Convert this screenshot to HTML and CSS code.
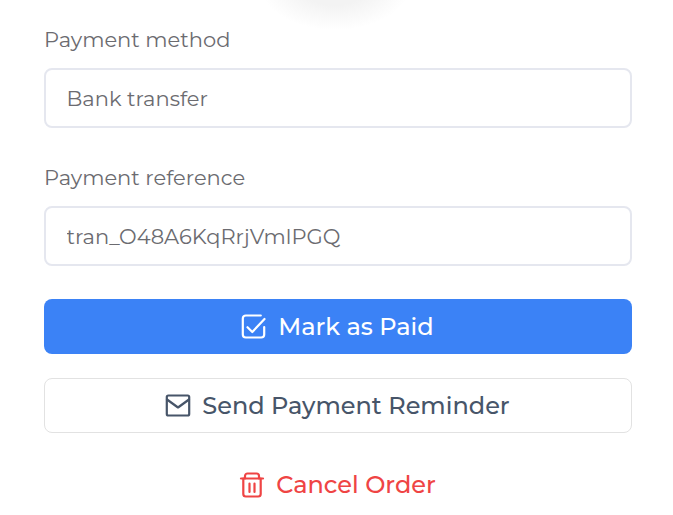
FILE: index.html
```html
<!DOCTYPE html>
<html lang="en">
  <head>
    <meta charset="UTF-8" />
    <meta name="viewport" content="width=device-width, initial-scale=1.0" />
    <title>Order payment</title>
    <link rel="stylesheet" href="styles.css">
  </head>
  <body>
    <div class="top-shadow"></div>

    <div class="field">
      <label class="field-label" for="method">Payment method</label>
      <input class="field-input" id="method" type="text" value="Bank transfer" />
    </div>

    <div class="field">
      <label class="field-label" for="reference">Payment reference</label>
      <input class="field-input" id="reference" type="text" value="tran_O48A6KqRrjVmlPGQ" />
    </div>

    <div class="actions">
      <button class="btn btn-primary" type="button">
        <svg class="icon" viewBox="0 0 26 26" fill="none" stroke="currentColor" stroke-width="2.2" stroke-linecap="round" stroke-linejoin="round">
          <path d="M23.200 13v7.500a3 3 0 0 1-3 3H4.800a3 3 0 0 1-3-3V4.500a3 3 0 0 1 3-3h15" />
          <path d="M6.500 13.200l4.800 4.800L23.500 5" />
        </svg>
        Mark as Paid
      </button>
      <button class="btn btn-outline" type="button">
        <svg class="icon" viewBox="0 0 26 26" fill="none" stroke="currentColor" stroke-width="2.2" stroke-linecap="round" stroke-linejoin="round">
          <rect x="1.800" y="2.500" width="22.400" height="20" rx="1.500" />
          <path d="M2 6.500l11 8 11-8" />
        </svg>
        Send Payment Reminder
      </button>
      <button class="btn btn-link" type="button">
        <svg class="icon" viewBox="0 0 26 26" fill="none" stroke="currentColor" stroke-width="2.2" stroke-linecap="round" stroke-linejoin="round">
          <path d="M2 6.500h22" />
          <path d="M6 6.500V4a2.500 2.500 0 0 1 2.500-2.500h9A2.500 2.500 0 0 1 20 4v2.500" />
          <path d="M4.300 6.500V22a2.500 2.500 0 0 0 2.500 2.500h12.400a2.500 2.500 0 0 0 2.500-2.500V6.500" />
          <path d="M10.500 11.500V20M15.500 11.500V20" />
        </svg>
        Cancel Order
      </button>
    </div>
  </body>
</html>
```

FILE: styles.css
```css
* {
  box-sizing: border-box;
}
body {
  position: relative;
  height: 515px;
  margin: 0;
  padding: 26px 41px 0 44px;
  overflow: hidden;
  background-color: #fff;
  font-family: 'Montserrat', 'Inter', sans-serif;
}
.top-shadow {
  position: absolute;
  top: -60px;
  left: 260px;
  width: 150px;
  height: 90px;
  border-radius: 50%;
  background: radial-gradient(closest-side, #f3f3f3 45%, #fff 100%);
}
.field {
  position: relative;
}
.field + .field {
  margin-top: 36px;
}
.field-label {
  display: block;
  margin-bottom: 15px;
  font-size: 21px;
  line-height: 27px;
  color: #6b6b70;
}
.field-input {
  display: block;
  width: 100%;
  height: 60px;
  padding: 0 20.5px;
  border: 2px solid #e5e7ef;
  border-radius: 8px;
  background-color: #fff;
  font: inherit;
  font-size: 21px;
  color: #6b6b70;
}
.actions {
  display: flex;
  flex-direction: column;
  gap: 24px;
  margin-top: 33px;
}
.btn {
  display: flex;
  align-items: center;
  justify-content: center;
  gap: 11px;
  width: 100%;
  height: 55px;
  padding: 0 1px 0 0;
  border: 1px solid transparent;
  border-radius: 8px;
  background: none;
  font: inherit;
  font-size: 24px;
  font-weight: 500;
}
.btn-primary {
  background-color: #3b82f6;
  color: #fff;
}
.btn-outline {
  border-color: #e2e2e2;
  color: #475569;
}
.btn-link {
  color: #ef4444;
}
.icon {
  width: 26px;
  height: 26px;
  flex-shrink: 0;
}
```
